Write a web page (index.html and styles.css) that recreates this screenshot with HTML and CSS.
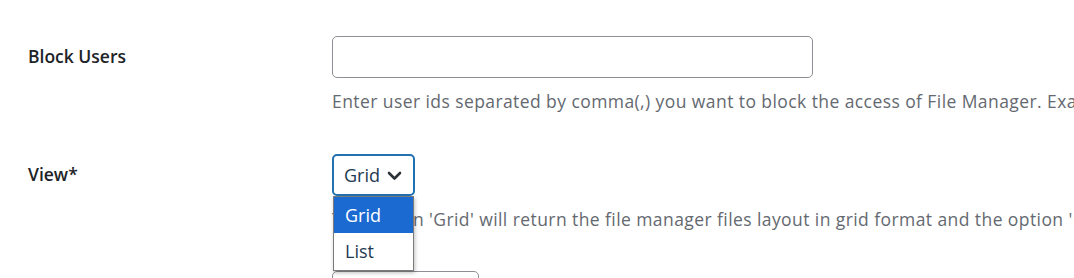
FILE: index.html
```html
<!DOCTYPE html>
<html>

<head>
    <title>File Manager Settings</title>
    <link rel="stylesheet" href="styles.css">
</head>

<body>

    <div class="form-table">

        <!-- Block Users -->
        <div class="row">
            <label class="row-label" for="block-users">Block Users</label>
            <div class="row-field">
                <input type="text" id="block-users" class="text-input wide">
                <p class="description">Enter user ids separated by comma(,) you want to block the access of File Manager. Example: 2,3,5</p>
            </div>
        </div>

        <!-- View -->
        <div class="row">
            <label class="row-label">View*</label>
            <div class="row-field">
                <div class="select-wrap">
                    <div class="select-box">
                        <span>Grid</span>
                        <svg class="chevron" width="15" height="10" viewBox="0 0 15 10">
                            <path d="M2 2 L7.5 7.5 L13 2" fill="none" stroke="#2c3338" stroke-width="2.6" stroke-linecap="round" stroke-linejoin="round"/>
                        </svg>
                    </div>
                    <ul class="select-menu">
                        <li class="selected">Grid</li>
                        <li>List</li>
                    </ul>
                </div>
                <p class="description">The option 'Grid' will return the file manager files layout in grid format and the option 'List' will return the files layout in list format.</p>
                <input type="text" class="text-input short">
            </div>
        </div>

    </div>

</body>

</html>
```

FILE: styles.css
```css
body { /* page */
    margin: 0;
    background-color: #ffffff;
    font-family: "Open Sans", "Noto Sans", sans-serif;
    color: #1d2327;
    overflow: hidden;
}

.form-table { /* settings table */
    padding-top: 36px;
    padding-left: 28px;
}

.row { /* one setting */
    display: flex;
    margin-bottom: 41px;
}

.row-label { /* left column text */
    width: 304px;
    flex-shrink: 0;
    font-size: 17.5px;
    font-weight: 600;
    line-height: 41px;
}

.row-field {
    flex: 1;
    min-width: 0;
}

.text-input { /* plain text box */
    display: block;
    box-sizing: border-box;
    height: 42px;
    border: 1px solid #8c8f94;
    border-radius: 5px;
    background: #ffffff;
    margin: 0;
}

.text-input.wide {
    width: 481px;
}

.text-input.short {
    width: 147px;
    margin-top: 40px;
}

.description { /* help text under a field */
    margin: 11px 0 0 0;
    font-size: 17.5px;
    letter-spacing: 0.42px;
    line-height: 24px;
    color: #646970;
    white-space: nowrap;
}

.select-wrap {
    position: relative;
    width: 83px;
}

.select-box { /* focused select */
    box-sizing: border-box;
    height: 42px;
    width: 83px;
    border: 2px solid #2271b1;
    border-radius: 5px;
    display: flex;
    align-items: center;
    gap: 7px;
    padding-left: 10px;
    font-size: 18px;
    color: #1e3a52;
}

.chevron {
    margin-top: 1px;
}

.select-menu { /* open dropdown list */
    position: absolute;
    top: 42px;
    left: 1px;
    width: 81px;
    margin: 0;
    padding: 0 0 1px 0;
    list-style: none;
    background: #ffffff;
    border: 1px solid #7a7a7a;
    box-shadow: 1px 2px 4px rgba(0, 0, 0, 0.25);
    box-sizing: border-box;
    z-index: 2;
}

.select-menu li {
    height: 36px;
    line-height: 36px;
    padding-left: 11px;
    font-size: 18px;
    color: #1e3a52;
}

.select-menu li.selected {
    background-color: #1a6ad2;
    color: #ffffff;
}
```
